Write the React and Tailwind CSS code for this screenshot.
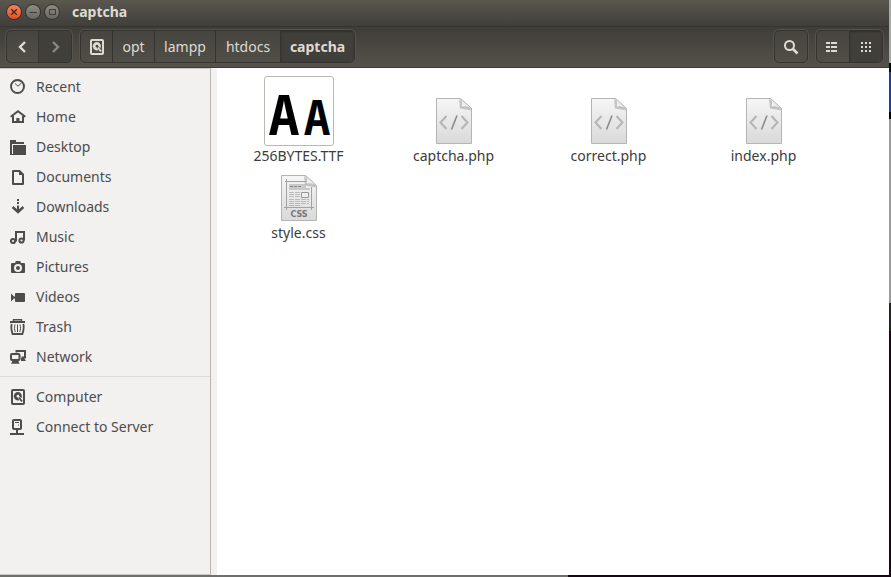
import { useState } from 'react'
import clsx from 'clsx'

const PLACES = [
  { name: 'Recent', icon: RecentIcon },
  { name: 'Home', icon: HomeIcon },
  { name: 'Desktop', icon: DesktopIcon },
  { name: 'Documents', icon: DocumentIcon },
  { name: 'Downloads', icon: DownloadIcon },
  { name: 'Music', icon: MusicIcon },
  { name: 'Pictures', icon: CameraIcon },
  { name: 'Videos', icon: VideoIcon },
  { name: 'Trash', icon: TrashIcon },
  { name: 'Network', icon: NetworkIcon },
]

const DEVICES = [
  { name: 'Computer', icon: DiskIcon },
  { name: 'Connect to Server', icon: ServerIcon },
]

const CRUMBS = [
  { name: 'opt', width: 'w-[42px]' },
  { name: 'lampp', width: 'w-[61px]' },
  { name: 'htdocs', width: 'w-[65px]' },
  { name: 'captcha', width: 'w-[74px]' },
]

const FILES = [
  { name: '256BYTES.TTF', icon: FontThumb },
  { name: 'captcha.php', icon: CodeFile },
  { name: 'correct.php', icon: CodeFile },
  { name: 'index.php', icon: CodeFile },
  { name: 'style.css', icon: CssFile },
]

export default function App() {
  const [view, setView] = useState('grid')

  return (
    <div className="min-h-screen flex flex-col bg-[#1a0618] font-['Noto_Sans','Open_Sans',sans-serif] text-sm">
      <div className="flex-1 flex">
        <div className="flex-1 min-w-0 flex flex-col">
          <TitleBar />
          <Toolbar view={view} setView={setView} />
          <div className="flex-1 flex bg-white">
            <Sidebar />
            <div className="w-[6px] bg-[#f2f1f0]" />
            <main className="flex-1 pt-2 pl-1">
              <ul className="flex flex-wrap items-end gap-y-[9px]">
                {FILES.map((f) => (
                  <li key={f.name} className="w-[155px] flex flex-col items-center">
                    <f.icon />
                    <span className="leading-5 text-[#3c3c3c]">{f.name}</span>
                  </li>
                ))}
              </ul>
            </main>
          </div>
        </div>
        {/* Windows peeking out behind the right edge */}
        <div className="w-[2px] flex flex-col">
          <div className="h-[63px] bg-[#a9a9a8]" />
          <div className="h-[9px] bg-black" />
          <div className="h-10 bg-[#1c3f9c]" />
          <div className="h-[7px] bg-black" />
          <div className="h-[184px] bg-[#9b9b9b]" />
          <div className="h-7 bg-[#222422]" />
        </div>
      </div>
      <div className="h-[2px] w-[568px] max-w-full bg-[#6f6f6c]" />
    </div>
  )
}

function TitleBar() {
  const button = 'size-4 rounded-full border border-[#33322d] flex items-center justify-center'
  return (
    <header className="h-[26px] pl-[6px] pb-[3px] flex items-center gap-[3px] bg-linear-to-b from-[#5a574e] to-[#403f3a]">
      <button aria-label="Close" className={clsx(button, 'bg-linear-to-b from-[#f4835c] to-[#e2501f]')}>
        <svg viewBox="0 0 14 14" className="size-[14px] shrink-0" stroke="#3c2a20" strokeWidth="1.3">
          <path d="M4.2 4.2l5.6 5.6M9.8 4.2l-5.6 5.6" />
        </svg>
      </button>
      <button aria-label="Minimize" className={clsx(button, 'bg-linear-to-b from-[#8f8d84] to-[#69675f]')}>
        <svg viewBox="0 0 14 14" className="size-[14px] shrink-0" stroke="#3c3b37">
          <path d="M3.5 7.5H11" />
        </svg>
      </button>
      <button aria-label="Maximize" className={clsx(button, 'bg-linear-to-b from-[#8f8d84] to-[#69675f]')}>
        <svg viewBox="0 0 14 14" className="size-[14px] shrink-0" stroke="#3c3b37" fill="none">
          <path d="M4.5 4.5h6v5h-6z" />
        </svg>
      </button>
      <h1 className="ml-[9px] font-bold text-[#dfdbd2]">captcha</h1>
    </header>
  )
}

function Toolbar({ view, setView }) {
  const group = 'h-[33px] flex rounded-[5px] border border-[#34332f] bg-linear-to-b from-[#46453f] to-[#504e47] shadow-[0_0_0_1px_#55534b] overflow-hidden'
  const cell = 'flex items-center justify-center'
  const pressed = 'bg-[#403f3a] shadow-[inset_0_1px_2px_#302f2b]'
  return (
    <div className="h-[42px] px-[6px] pb-px flex items-center border-t border-t-[#36352f] border-b border-b-[#3c3b37] bg-linear-to-b from-[#3e3d38] to-[#55524a] text-[#dfdbd2]">
      <div className={group}>
        <button aria-label="Back" className={clsx(cell, 'w-[31px]')}>
          <Chevron d="M10 3L5 8l5 5" color="#dfdbd2" />
        </button>
        <button aria-label="Forward" disabled className={clsx(cell, 'w-[33px] border-l border-[#383733] bg-[#403f3a]')}>
          <Chevron d="M6 3l5 5-5 5" color="#8b887f" />
        </button>
      </div>

      <nav aria-label="Path" className={clsx(group, 'ml-2')}>
        <button aria-label="Computer" className={clsx(cell, 'w-[31px]')}>
          <DiskIcon />
        </button>
        {CRUMBS.map((c, i) => (
          <button
            key={c.name}
            className={clsx(cell, c.width, 'border-l border-[#34332f]', i === CRUMBS.length - 1 && pressed, i === CRUMBS.length - 1 && 'font-bold')}
          >
            {c.name}
          </button>
        ))}
      </nav>

      <button aria-label="Search" className={clsx(group, cell, 'ml-auto w-[34px]')}>
        <svg viewBox="0 0 16 16" className="size-4" fill="none" stroke="currentColor" strokeWidth="2">
          <circle cx="6.5" cy="6.5" r="4.5" />
          <path d="M10 10l4.5 4.5" strokeWidth="2.6" />
        </svg>
      </button>
      <div className={clsx(group, 'ml-2')}>
        <button aria-label="List view" onClick={() => setView('list')} className={clsx(cell, 'w-8', view === 'list' && pressed)}>
          <svg viewBox="0 0 16 16" className="size-4" fill="currentColor">
            <path d="M1 3h4v2H1zM6 3h6v2H6zM1 7h4v2H1zM6 7h6v2H6zM1 11h4v2H1zM6 11h6v2H6z" />
          </svg>
        </button>
        <button aria-label="Icon view" onClick={() => setView('grid')} className={clsx(cell, 'w-[33px] border-l border-[#34332f]', view === 'grid' && pressed)}>
          <svg viewBox="0 0 16 16" className="size-4" fill="currentColor">
            <path d="M3 3h2v2H3zM7 3h2v2H7zM11 3h2v2h-2zM3 7h2v2H3zM7 7h2v2H7zM11 7h2v2h-2zM3 11h2v2H3zM7 11h2v2H7zM11 11h2v2h-2z" />
          </svg>
        </button>
      </div>
    </div>
  )
}

function Chevron({ d, color }) {
  return (
    <svg viewBox="0 0 16 16" className="size-4" fill="none" stroke={color} strokeWidth="2.4">
      <path d={d} />
    </svg>
  )
}

function Sidebar() {
  return (
    <aside className="w-[211px] shrink-0 pt-[3px] border-t border-r border-b border-t-[#c9c7c4] border-r-[#b6b4b1] border-b-[#c9c7c4] bg-[#f2f1f0] text-[#4c4c4c]">
      <PlaceList items={PLACES} />
      <hr className="mt-1 mb-[5px] border-[#dcdad7]" />
      <PlaceList items={DEVICES} />
    </aside>
  )
}

function PlaceList({ items }) {
  return (
    <ul>
      {items.map((p) => (
        <li key={p.name}>
          <a href="#" className="h-[30px] pl-[10px] flex items-center gap-[10px]">
            <p.icon />
            {p.name}
          </a>
        </li>
      ))}
    </ul>
  )
}

/* ---- Sidebar icons, all on a 16px grid ---- */

function Icon({ children }) {
  return (
    <svg viewBox="0 0 16 16" className="size-4 shrink-0" fill="none" stroke="currentColor" strokeWidth="2" aria-hidden="true">
      {children}
    </svg>
  )
}

function RecentIcon() {
  return (
    <Icon>
      <circle cx="7.5" cy="7.5" r="6.5" />
      <path d="M5 4.5l3 2.7 3.5-3.2" strokeWidth="1" />
    </Icon>
  )
}

function HomeIcon() {
  return (
    <Icon>
      <path d="M.7 7.7L8 2.2l7.3 5.5" />
      <path d="M3 7v6h10V7" />
      <path d="M6.3 9h3.2v4.5H6.3z" fill="currentColor" stroke="none" />
    </Icon>
  )
}

function DesktopIcon() {
  return (
    <Icon>
      <path d="M0 1h6v2h8v2H2v11H0z" fill="currentColor" stroke="none" />
      <path d="M3 6h13v10H3z" fill="currentColor" stroke="none" />
      <path d="M0 15.5h4" strokeWidth="1" />
    </Icon>
  )
}

function DocumentIcon() {
  return (
    <Icon>
      <path d="M3 2h6.5L13 5.5V15H3z" strokeLinejoin="round" />
      <path d="M9 2v4h4z" fill="currentColor" stroke="none" />
    </Icon>
  )
}

function DownloadIcon() {
  return (
    <Icon>
      <path d="M7 0h2v2H7zM7 3h2v2H7z" fill="currentColor" stroke="none" />
      <path d="M8 6.5V12" />
      <path d="M2.6 8L8 13 13.4 8" strokeWidth="2.4" />
    </Icon>
  )
}

function MusicIcon() {
  return (
    <Icon>
      <circle cx="3" cy="12" r="2.1" />
      <circle cx="11.5" cy="11.5" r="2.1" />
      <path d="M6 12.5V3h8v8.5" />
    </Icon>
  )
}

function CameraIcon() {
  return (
    <Icon>
      <path
        d="M2 4h3l.8-2h4.4L11 4h3q1 0 1 1v8q0 1-1 1H2q-1 0-1-1V5q0-1 1-1zM8 5a4 4 0 1 0 0 8 4 4 0 0 0 0-8z"
        fill="currentColor"
        fillRule="evenodd"
        stroke="none"
      />
      <circle cx="8" cy="9" r="2" fill="currentColor" stroke="none" />
    </Icon>
  )
}

function VideoIcon() {
  return (
    <Icon>
      <path d="M6 4h8q1 0 1 1v7q0 1-1 1H6q-1 0-1-1V9.5H4L1 12.5v-8l3 3h1V5q0-1 1-1z" fill="currentColor" stroke="none" />
    </Icon>
  )
}

function TrashIcon() {
  return (
    <Icon>
      <path d="M0 2h15v2H0z" fill="currentColor" stroke="none" />
      <path d="M3.5 2V.7h8V2" strokeWidth="1.4" />
      <path d="M1.7 5C.7 9 1.5 12 2.6 15h9.8C13.5 12 14.3 9 13.3 5" strokeWidth="1.8" />
      <path d="M5 5.5c-.8 3-.6 5 .3 7.5M7.5 5.5V13M10 5.5c.8 3 .6 5-.3 7.5" strokeWidth="1" />
    </Icon>
  )
}

function NetworkIcon() {
  return (
    <Icon>
      <path d="M6.5 3.5V2H15v6.5h-3.5" />
      <path d="M11 9h3l2 3h-5z" fill="currentColor" stroke="none" />
      <rect x="1" y="5" width="8.5" height="6" rx="1" />
      <path d="M3 11h5l1.5 3.8H1z" fill="currentColor" stroke="none" />
    </Icon>
  )
}

function DiskIcon() {
  return (
    <Icon>
      <rect x="2" y="1" width="12" height="14" rx="1" />
      <path
        d="M8 3a4.2 4.2 0 1 0 1.2 8.2L8 8.6a1.4 1.4 0 1 1 1.3-1.4l2.1 2.1A4.2 4.2 0 0 0 8 3z"
        fill="currentColor"
        stroke="none"
      />
      <path d="M9 8.5l3 4" strokeWidth="1.8" />
    </Icon>
  )
}

function ServerIcon() {
  return (
    <Icon>
      <rect x="3" y="1" width="8" height="9" rx="1" />
      <path d="M5 3.5h4M8 6h1" strokeWidth="1" />
      <path d="M7 10v4.5M0 15h14" />
    </Icon>
  )
}

/* ---- File thumbnails ---- */

function FontThumb() {
  return (
    <div className="size-[70px] rounded-[3px] border border-[#b9b8b2] bg-white">
      <svg
        viewBox="0 0 68 68"
        className="size-[68px] overflow-visible font-['Open_Sans_Condensed','Roboto_Condensed','Liberation_Sans_Narrow','Noto_Sans',sans-serif] font-bold"
        aria-hidden="true"
      >
        <text x="4" y="58" fontSize="56">A</text>
        <text x="65" y="58" fontSize="48" textAnchor="end">A</text>
      </svg>
    </div>
  )
}

function Sheet({ children }) {
  return (
    <svg viewBox="0 0 38 48" className="w-[38px] h-12" fill="none" aria-hidden="true">
      <defs>
        <linearGradient id="paper" x1="0" y1="0" x2="0" y2="1">
          <stop offset="0" stopColor="#f6f6f6" />
          <stop offset="1" stopColor="#d9d9d9" />
        </linearGradient>
        <linearGradient id="fold" x1="0" y1="1" x2="1" y2="0">
          <stop offset="0" stopColor="#ffffff" />
          <stop offset="1" stopColor="#d0d0d0" />
        </linearGradient>
      </defs>
      <path d="M1.5.5h24l11 10v35h-35z" fill="url(#paper)" stroke="#b4b4b4" />
      {children}
      <path d="M24 1l1 9.5 11.5 2-2-3z" fill="#a8a8a8" opacity=".6" />
      <path d="M25.5.5c1.5 3 1.2 6 .5 8.5 3.5-.6 7 0 10.5 1.5z" fill="url(#fold)" stroke="#b4b4b4" strokeWidth=".7" />
    </svg>
  )
}

function CodeFile() {
  return (
    <Sheet>
      <path d="M11.5 18l-6 6.5 6 6.5M26.5 18l6 6.5-6 6.5" stroke="#b5b5b5" strokeWidth="2" />
      <path d="M22 17.5l-5.5 14" stroke="#8a8a8a" strokeWidth="1.6" />
    </Sheet>
  )
}

function CssFile() {
  return (
    <Sheet>
      <path d="M5 6.5h21M6.5 4v31M31.5 12v23M4 32.5h30" stroke="#a3a3a3" />
      <path d="M9 9h17v4h4v2H9z" fill="#c9c9c9" />
      <path d="M10 11.5h11" stroke="#8a8a8a" strokeDasharray="3 1" />
      <path d="M9 17.5h11M9 19.5h11M9 21.5h11M9 24.5h20M9 26.5h20M9 28.5h20M9 30.5h12" stroke="#bbb" strokeDasharray="5 1" />
      <path d="M21.5 17.5h7v5h-7z" fill="#eee" stroke="#999" />
      <text x="19" y="42" textAnchor="middle" fontSize="8" fontWeight="700" fill="#777" className="font-['DejaVu_Sans',sans-serif]">CSS</text>
    </Sheet>
  )
}
